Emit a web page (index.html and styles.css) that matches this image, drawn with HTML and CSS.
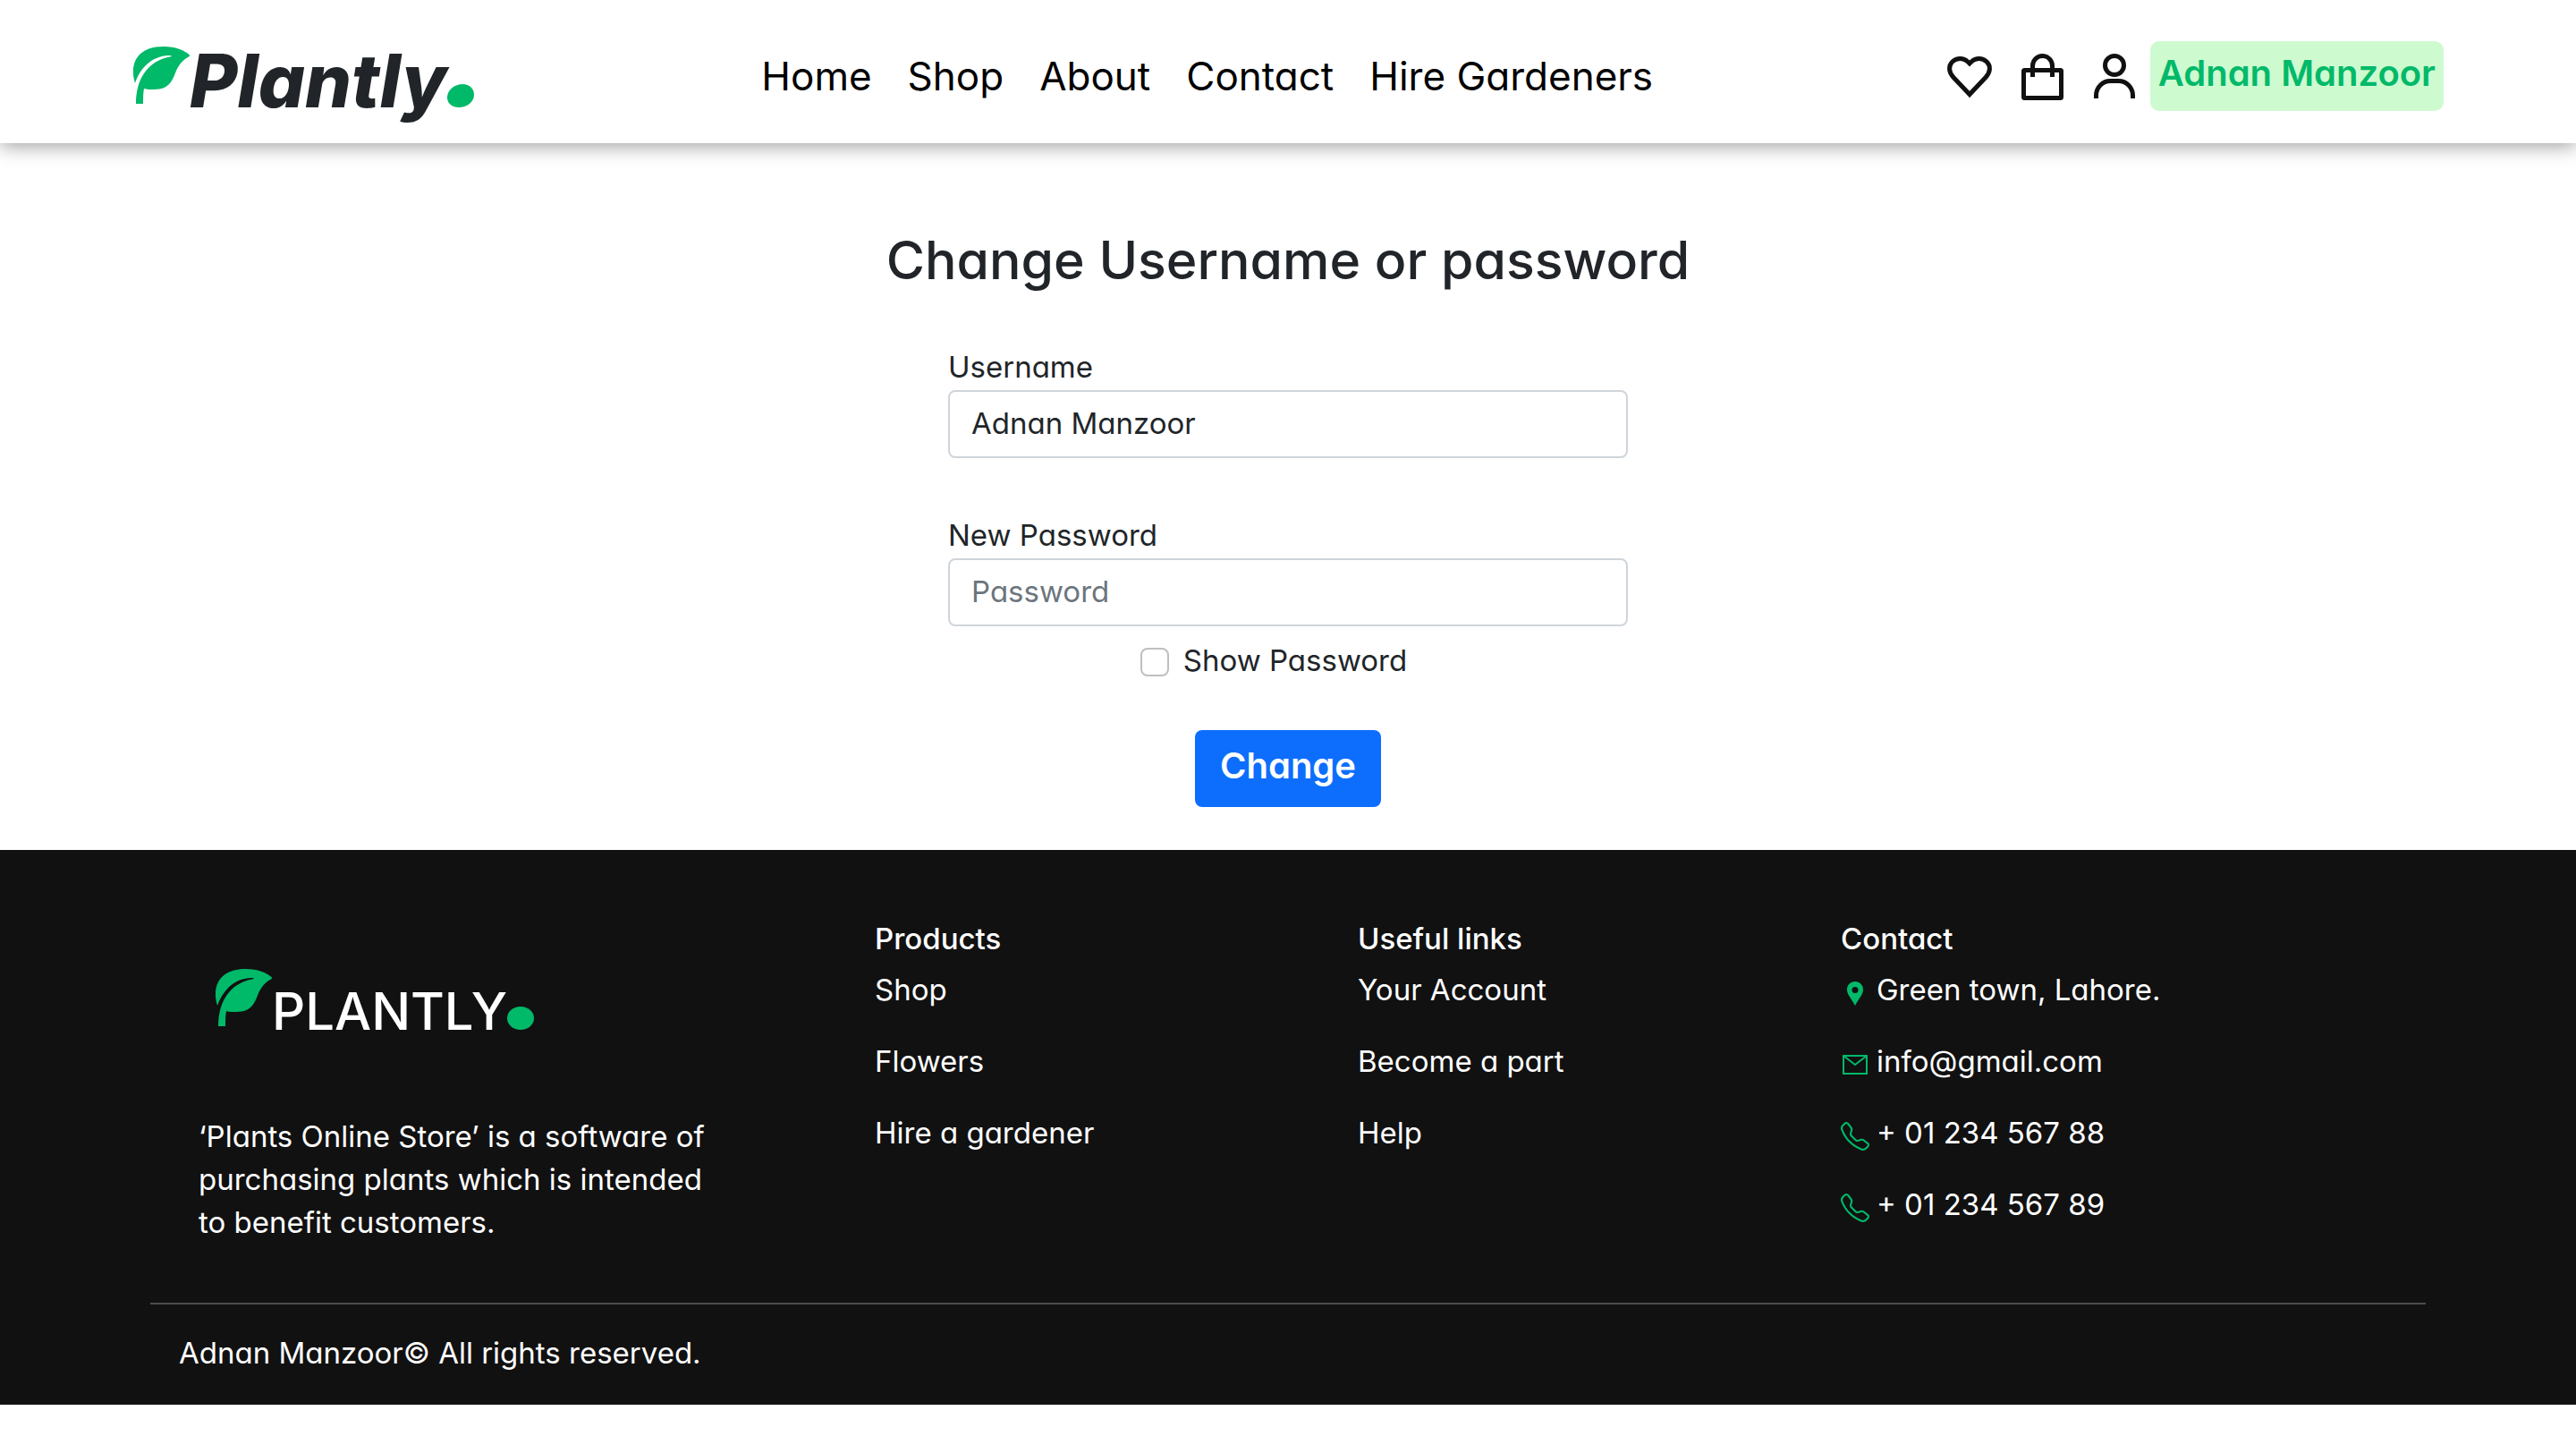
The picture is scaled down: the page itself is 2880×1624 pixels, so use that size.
FILE: index.html
```html
<!DOCTYPE html>
<html lang="en">
<head>
<meta charset="utf-8">
<meta name="viewport" content="width=device-width, initial-scale=1">
<title>Plantly - Change Username or password</title>
<link rel="stylesheet" href="styles.css">
</head>
<body>
<svg class="sprite" aria-hidden="true">
  <symbol id="leaf" viewBox="0 0 64 64" preserveAspectRatio="xMidYMin meet"><path d="M3 41C-3 22 3 0 35 0C48 0 58 4 64 9.500C64 11 63 11.500 62 12C55 16 52 21 49 27C45 37 42 48 24 48C20 48 16 48 13 47C12 52 12 58 12 64H4C4 40 14 16 44 11C44 10 42 10 40 10C20 11 8 26 3 41Z"/></symbol>
  <symbol id="phone" viewBox="0 0 16 16"><path d="M3.654 1.328a.678.678 0 0 0-1.015-.063L1.605 2.300c-.483.484-.661 1.169-.45 1.770a17.568 17.568 0 0 0 4.168 6.608 17.569 17.569 0 0 0 6.608 4.168c.601.211 1.286.033 1.770-.45l1.034-1.034a.678.678 0 0 0-.063-1.015l-2.307-1.794a.678.678 0 0 0-.580-.122l-2.190.547a1.745 1.745 0 0 1-1.657-.459L5.482 8.062a1.745 1.745 0 0 1-.460-1.657l.548-2.190a.678.678 0 0 0-.122-.580L3.654 1.328zM1.884.511a1.745 1.745 0 0 1 2.612.163L6.290 2.980c.329.423.445.974.315 1.494l-.547 2.190a.678.678 0 0 0 .178.643l2.457 2.457a.678.678 0 0 0 .644.178l2.189-.547a1.745 1.745 0 0 1 1.494.315l2.306 1.794c.829.645.905 1.870.163 2.611l-1.034 1.034c-.740.740-1.846 1.065-2.877.702a18.634 18.634 0 0 1-7.010-4.420 18.634 18.634 0 0 1-4.420-7.009c-.362-1.030-.037-2.137.703-2.877L1.885.511z"/></symbol>
</svg>

<header class="header">
  <a class="logo" href="#" aria-label="Plantly home">
    <svg class="logo-leaf"><use href="#leaf"/></svg>
    <span class="logo-text">Plantly</span>
    <svg class="logo-dot" viewBox="0 0 30 26"><path d="M17 0C25 0 30 5 30 12C30 20 22 26 13 26C5 26 0 21 0 15C0 7 8 0 17 0Z"/></svg>
  </a>
  <nav class="nav">
    <a href="#">Home</a>
    <a href="#">Shop</a>
    <a href="#">About</a>
    <a href="#">Contact</a>
    <a href="#">Hire Gardeners</a>
  </nav>
  <div class="actions">
    <a class="action" href="#" aria-label="Wishlist"><svg viewBox="0 0 64 64"><path d="M32 52.500L14 33.500C8.500 27.500 8 20.500 13 15.800C18 11.300 25 11.500 30 16L32 18L34 16C39 11.500 46 11.300 51 15.800C56 20.500 55.500 27.500 50 33.500Z"/></svg></a>
    <a class="action" href="#" aria-label="Cart"><svg viewBox="0 0 64 64"><rect x="11.500" y="25.500" width="42" height="31" rx="1"/><path d="M21.500 33V20.500A11 11 0 0 1 43.500 20.500V33"/></svg></a>
    <a class="action" href="#" aria-label="Profile"><svg viewBox="0 0 64 64"><circle cx="32" cy="20" r="10.500"/><path d="M11.500 57V53.500A16 16 0 0 1 27.500 37.500H36.500A16 16 0 0 1 52.500 53.500V57"/></svg></a>
    <a class="user" href="#">Adnan Manzoor</a>
  </div>
</header>

<main class="main">
  <h1 class="title">Change Username or password</h1>
  <form class="form">
    <div class="field">
      <label for="username">Username</label>
      <input class="input" id="username" type="text" value="Adnan Manzoor">
    </div>
    <div class="field">
      <label for="password">New Password</label>
      <input class="input" id="password" type="password" placeholder="Password">
    </div>
    <div class="check">
      <input class="checkbox" id="show" type="checkbox">
      <label for="show">Show Password</label>
    </div>
    <button class="button" type="button">Change</button>
  </form>
</main>

<footer class="footer">
  <div class="footer-columns">
    <section class="about">
      <a class="logo logo-light" href="#" aria-label="Plantly home">
        <svg class="logo-leaf"><use href="#leaf"/></svg>
        <span class="logo-text">PLANTLY</span>
        <svg class="logo-dot" viewBox="0 0 30 26"><ellipse cx="15" cy="13" rx="15" ry="13"/></svg>
      </a>
      <p class="about-text">‘Plants Online Store’ is a software of purchasing plants which is intended to benefit customers.</p>
    </section>
    <section>
      <h2 class="footer-title">Products</h2>
      <ul class="links">
        <li><a href="#">Shop</a></li>
        <li><a href="#">Flowers</a></li>
        <li><a href="#">Hire a gardener</a></li>
      </ul>
    </section>
    <section>
      <h2 class="footer-title">Useful links</h2>
      <ul class="links">
        <li><a href="#">Your Account</a></li>
        <li><a href="#">Become a part</a></li>
        <li><a href="#">Help</a></li>
      </ul>
    </section>
    <section>
      <h2 class="footer-title">Contact</h2>
      <ul class="links">
        <li><svg class="contact-icon" viewBox="0 0 32 32"><path fill-rule="evenodd" d="M16 3C10.800 3 7 7 7 12C7 18 12 22 16 30C20 22 25 18 25 12C25 7 21.200 3 16 3ZM16 9A3.500 3.500 0 1 1 16 16A3.500 3.500 0 1 1 16 9Z"/></svg>Green town, Lahore.</li>
        <li><svg class="contact-icon" viewBox="0 0 32 32"><path class="line" d="M3 6H29V26H3ZM3 6L16 16L29 6"/></svg>info@gmail.com</li>
        <li><svg class="contact-icon"><use href="#phone"/></svg>+ 01 234 567 88</li>
        <li><svg class="contact-icon"><use href="#phone"/></svg>+ 01 234 567 89</li>
      </ul>
    </section>
  </div>
  <p class="copyright">Adnan Manzoor© All rights reserved.</p>
</footer>
</body>
</html>
```
FILE: styles.css
```css
* {
  box-sizing: border-box;
}

body {
  margin: 0;
  background: #fff;
  color: #212529;
  font-family: Inter, "Open Sans", sans-serif;
  font-size: 33px;
  line-height: 48px;
  font-feature-settings: "cv11";
}

a {
  color: inherit;
  text-decoration: none;
}

.sprite {
  display: none;
}

.header {
  position: relative;
  display: flex;
  justify-content: space-between;
  align-items: center;
  padding: 28px 148px 18px;
  background: #fff;
  box-shadow: 0 4px 20px rgba(0, 0, 0, 0.36);
}

.logo {
  display: flex;
  align-items: baseline;
  color: #212529;
  fill: #00b969;
}

.header .logo {
  padding-top: 12px;
}

.logo-leaf {
  width: 64px;
  height: 68px;
}

.logo-text {
  font-size: 82px;
  font-style: italic;
  font-weight: 800;
  line-height: 102px;
}

.logo-dot {
  width: 30px;
  height: 26px;
}

.nav {
  display: flex;
  gap: 40px;
  color: #000;
  font-size: 44px;
  line-height: 60px;
}

.actions {
  display: flex;
  justify-content: flex-end;
  align-items: center;
}

.action {
  display: flex;
  margin-right: 17px;
}

.action:nth-child(3) {
  margin-right: 8px;
}

.action svg {
  width: 64px;
  height: 64px;
  fill: none;
  stroke: #111;
  stroke-width: 5;
}

.user {
  padding: 6px 9px 12px;
  border-radius: 10px;
  background: #cefad0;
  color: #00b969;
  font-size: 40px;
  font-weight: 600;
  line-height: 60px;
}

.main {
  display: flex;
  flex-direction: column;
  align-items: center;
  padding: 96px 24px 48px;
}

.title {
  margin: 0 0 60px;
  font-size: 59px;
  font-weight: 500;
  line-height: 70px;
}

.form {
  display: flex;
  flex-direction: column;
  align-items: center;
  width: 100%;
  max-width: 760px;
}

.field {
  display: flex;
  flex-direction: column;
  gap: 2px;
  width: 100%;
}

.field + .field {
  margin-top: 62px;
}

.input {
  width: 100%;
  height: 76px;
  padding: 0 24px 2px;
  border: 2px solid #ced4da;
  border-radius: 8px;
  background: #fff;
  color: #212529;
  font: inherit;
}

.input::placeholder {
  color: #6c757d;
  opacity: 1;
}

.check {
  display: flex;
  align-items: center;
  gap: 16px;
  margin: 14px 32px 54px 0;
}

.checkbox {
  appearance: none;
  width: 32px;
  height: 32px;
  margin: 4px 0 0;
  border: 2px solid #bfbfbf;
  border-radius: 8px;
  background: #fff;
}

.button {
  padding: 10px 28px 16px;
  border: 0;
  border-radius: 8px;
  background: #0d6efd;
  color: #fff;
  font: inherit;
  font-size: 40px;
  font-weight: 600;
  line-height: 60px;
}

.footer {
  padding: 80px 168px 20px;
  background: #111;
  color: #fff;
}

.footer-columns {
  display: grid;
  grid-template-columns: 3fr repeat(3, 2fr);
  padding: 0 114px 66px 0;
  border-bottom: 2px solid #4c4c4c;
}

.about {
  padding: 52px 170px 0 54px;
}

.logo-light {
  padding-left: 18px;
  color: #fff;
}

.logo-light .logo-text {
  font-size: 58px;
  font-style: normal;
  font-weight: 500;
  line-height: 96px;
}

.about-text {
  margin: 68px 0 0;
}

.footer-title {
  margin: 0 0 14px;
  font-size: 33px;
  font-weight: 500;
  line-height: 38px;
}

.links {
  display: flex;
  flex-direction: column;
  gap: 32px;
  margin: 0;
  padding: 0;
  list-style: none;
}

.links li {
  display: flex;
  align-items: center;
}

.contact-icon {
  width: 32px;
  height: 32px;
  margin: 8px 8px 0 0;
  fill: #00b969;
}

.contact-icon .line {
  fill: none;
  stroke: #00b969;
  stroke-width: 2;
}

.copyright {
  margin: 30px 0 14px 32px;
}
```
